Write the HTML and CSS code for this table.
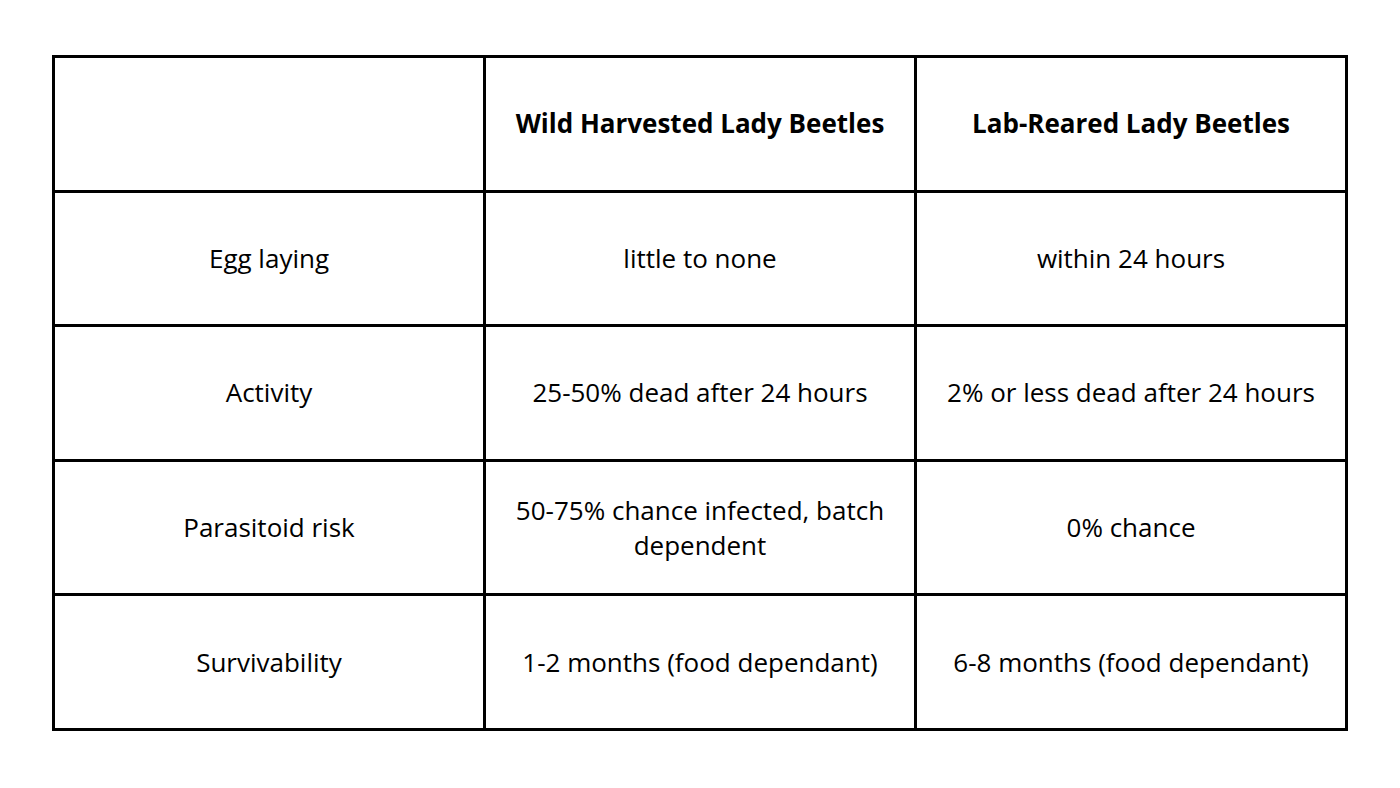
FILE: index.html
```html
<!DOCTYPE html>
<html lang="en">
<head>
<meta charset="utf-8">
<title>Lady Beetles Comparison</title>
<link rel="stylesheet" href="styles.css">
</head>
<body>
<main class="page">
  <div class="compare" role="table">
    <div class="cell head"></div>
    <div class="cell head">Wild Harvested Lady Beetles</div>
    <div class="cell head">Lab-Reared Lady Beetles</div>

    <div class="cell">Egg laying</div>
    <div class="cell">little to none</div>
    <div class="cell">within 24 hours</div>

    <div class="cell">Activity</div>
    <div class="cell">25-50% dead after 24 hours</div>
    <div class="cell">2% or less dead after 24 hours</div>

    <div class="cell">Parasitoid risk</div>
    <div class="cell">50-75% chance infected, batch dependent</div>
    <div class="cell">0% chance</div>

    <div class="cell">Survivability</div>
    <div class="cell">1-2 months (food dependant)</div>
    <div class="cell">6-8 months (food dependant)</div>
  </div>
</main>
</body>
</html>
```

FILE: styles.css
```css
html, body {
  margin: 0;
  padding: 0;
  background: #ffffff;
}

.page {
  padding: 55px 0 0 52px;
  font-family: "Open Sans", "Liberation Sans", sans-serif;
  color: #000000;
}

.compare {
  display: grid;
  grid-template-columns: repeat(3, 428px);
  grid-auto-rows: 131.6px;
  gap: 3px;
  padding: 3px;
  background: #000000;
  width: max-content;
}

.cell {
  background: #ffffff;
  display: flex;
  align-items: center;
  justify-content: center;
  text-align: center;
  padding: 0 28px;
  font-size: 26px;
  line-height: 35px;
  font-weight: 400;
}

.cell.head {
  font-weight: 700;
}
```
